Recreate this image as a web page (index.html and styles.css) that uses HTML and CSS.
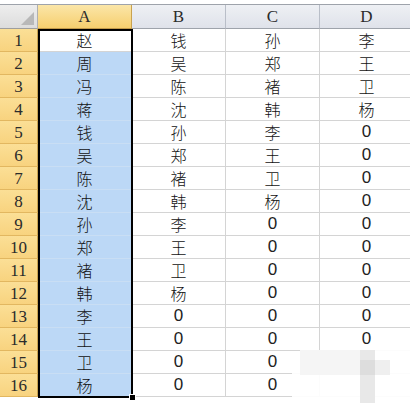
FILE: index.html
```html
<!DOCTYPE html>
<html>
<head>
<meta charset="utf-8">
<link rel="stylesheet" href="styles.css">
</head>
<body>
<div class="page">
  <div class="sheet">
    <div class="grid" id="grid">
      <div class="corner"><span class="tri"></span></div>
      <div class="colhead sel">A</div>
      <div class="colhead">B</div>
      <div class="colhead">C</div>
      <div class="colhead">D</div>
    </div>
    <div class="selection"><span class="handle"></span></div>
  </div>
  <div class="mark">
    <span class="m1"></span><span class="m2"></span><span class="m3"></span><span class="m4"></span>
  </div>
</div>
<script src="script.js"></script>
</body>
</html>
```

FILE: script.js
```js
var A = "赵周冯蒋钱吴陈沈孙郑褚韩李王卫杨".split("");
var B = "钱吴陈沈孙郑褚韩李王卫杨".split("");
var C = "孙郑褚韩李王卫杨".split("");
var D = "李王卫杨".split("");
var grid = document.getElementById("grid");
function cell(cls, txt) {
  var d = document.createElement("div");
  d.className = cls;
  d.textContent = txt;
  grid.appendChild(d);
}
for (var i = 0; i < 16; i++) {
  cell("rowhead", String(i + 1));
  cell(i === 0 ? "cell cjk" : "cell cjk hl", A[i]);
  [B, C, D].forEach(function (col) {
    if (i < col.length) cell("cell cjk", col[i]);
    else cell("cell num", "0");
  });
}
```

FILE: styles.css
```css
html, body {
  margin: 0;
  padding: 0;
  background: #fff;
}
.page {
  position: relative;
  width: 410px;
  height: 403px;
  overflow: hidden;
  padding-top: 4px;
  box-sizing: border-box;
}
.sheet {
  position: relative;
  width: 414px;
}
.grid {
  display: grid;
  grid-template-columns: 38px repeat(4, 94px);
  grid-template-rows: 24px repeat(16, 23px);
  border-top: 1px solid #9ea3ab;
}
.grid > div {
  box-sizing: border-box;
  border-right: 1px solid #d4d4d4;
  border-bottom: 1px solid #d4d4d4;
  display: flex;
  align-items: center;
  justify-content: center;
}
.corner {
  position: relative;
  background: linear-gradient(#eeeeee, #dcdcdc);
  border-right: 1px solid #b0b0b0 !important;
  border-bottom: 1px solid #9e9e9e !important;
}
.tri {
  position: absolute;
  right: 3px;
  bottom: 3px;
  width: 0;
  height: 0;
  border-left: 13px solid transparent;
  border-bottom: 13px solid #b8b8b8;
}
.colhead {
  font-family: "Liberation Serif", serif;
  font-size: 17px;
  color: #2b2b2b;
  background: linear-gradient(#eef0f4, #dfe2ea);
  border-right: 1px solid #b9bec8 !important;
  border-bottom: 1px solid #9ea3ab !important;
  padding-top: 1px;
}
.colhead.sel {
  background: linear-gradient(#fbe6a8, #f6cf6f);
  border-right: 1px solid #c9a24f !important;
  border-bottom: 1px solid #c29a4a !important;
}
.rowhead {
  font-family: "Liberation Serif", serif;
  font-size: 17px;
  color: #2b2b2b;
  background: linear-gradient(#fbdf96, #f8d37f);
  border-right: 1px solid #c9a24f !important;
  border-bottom: 1px solid #e2b760 !important;
  padding-top: 1px;
}
.cell {
  color: #111;
}
.cjk {
  font-family: "Noto Sans CJK SC", sans-serif;
  font-size: 16px;
  font-weight: 300;
}
.num {
  font-family: "Liberation Sans", sans-serif;
  font-size: 17px;
  color: #222;
}
.hl {
  background: #bcd8f6;
  border-bottom-color: #c9def4 !important;
}
.selection {
  position: absolute;
  left: 38px;
  top: 25px;
  width: 95px;
  height: 369px;
  border: 2px solid #000;
  box-sizing: border-box;
  pointer-events: none;
}
.handle {
  position: absolute;
  right: -5px;
  bottom: -5px;
  width: 5px;
  height: 5px;
  background: #000;
  border: 1px solid #fff;
}
.mark {
  position: absolute;
  left: 292px;
  top: 350px;
  width: 118px;
  height: 53px;
  background: rgba(255, 255, 255, 0.93);
  border-radius: 14px 0 0 0;
}
.mark span {
  position: absolute;
}
.m1 { left: 8px; top: 0; width: 60px; height: 25px; background: #f5f5f5; }
.m2 { left: 68px; top: 0; width: 15px; height: 53px; background: #e8e8e8; }
.m3 { left: 68px; top: 10px; width: 15px; height: 15px; background: #dddddd; }
.m4 { left: 83px; top: 10px; width: 15px; height: 15px; background: #efefef; }
```
